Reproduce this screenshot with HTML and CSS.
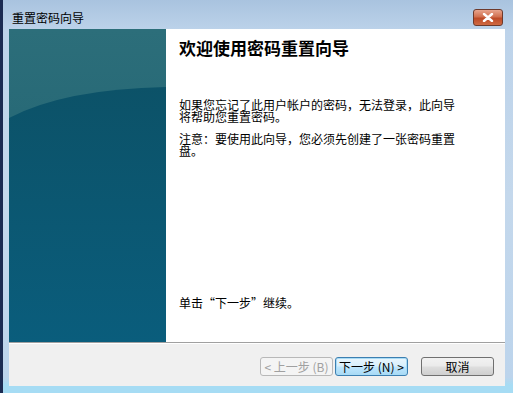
FILE: index.html
```html
<!DOCTYPE html>
<html lang="zh-CN">
<head>
    <meta charset="UTF-8">
    <title>重置密码向导</title>
    <link rel="stylesheet" href="styles.css">
</head>
<body>
    <div class="window">
        <div class="titlebar">
            <span class="title">重置密码向导</span>
            <button class="close">
                <svg width="12" height="9" viewBox="0 0 12 9">
                    <path d="M2 1 L10 8 M10 1 L2 8" stroke="#fff" stroke-width="2.4" stroke-linecap="round"/>
                </svg>
            </button>
        </div>

        <div class="client">
            <div class="content">
                <div class="side">
                    <svg width="157" height="313" viewBox="0 0 157 313" preserveAspectRatio="none">
                        <defs>
                            <linearGradient id="top" x1="0" y1="0" x2="0" y2="1">
                                <stop offset="0" stop-color="#2c6e7a"/>
                                <stop offset="1" stop-color="#1d5f6f"/>
                            </linearGradient>
                            <linearGradient id="low" x1="0" y1="0" x2="0" y2="1">
                                <stop offset="0" stop-color="#0c5268"/>
                                <stop offset="1" stop-color="#0a5d7c"/>
                            </linearGradient>
                        </defs>
                        <rect width="157" height="313" fill="url(#top)"/>
                        <path d="M0 89 Q55 60 157 58 L157 313 L0 313 Z" fill="url(#low)"/>
                    </svg>
                </div>
                <div class="main">
                    <h1>欢迎使用密码重置向导</h1>
                    <p class="intro">如果您忘记了此用户帐户的密码，无法登录，此向导将帮助您重置密码。</p>
                    <p class="note">注意：要使用此向导，您必须先创建了一张密码重置盘。</p>
                    <p class="next-hint">单击“下一步”继续。</p>
                </div>
            </div>

            <div class="footer">
                <button class="btn disabled">&lt; 上一步 (B)</button>
                <button class="btn primary">下一步 (N) &gt;</button>
                <button class="btn cancel">取消</button>
            </div>
        </div>
    </div>
</body>
</html>
```

FILE: styles.css
```css
body {
    margin: 0;
    background: #1b2b52;
    font-family: "Noto Sans CJK SC", "Noto Sans", sans-serif;
    overflow: hidden;
}

.window {
    width: 510px;
    height: 393px;
    margin-left: 3px;
    background: linear-gradient(180deg, #a9c3df 0%, #bdd3ea 8%, #c4d8ec 50%, #bcd4ec 96%, #a6dcf4 98%);
    box-sizing: border-box;
    padding: 0 8px 7px 6px;
    display: flex;
    flex-direction: column;
}

.titlebar {
    height: 29px;
    display: flex;
    align-items: flex-start;
    justify-content: space-between;
}

.title {
    font-size: 12px;
    line-height: 12px;
    margin: 12px 0 0 3px;
    color: #000;
}

.close {
    width: 30px;
    height: 17px;
    margin: 9px 2px 0 0;
    padding: 0;
    border: 1px solid #6d3a2c;
    border-radius: 3px;
    background: linear-gradient(180deg, #e8a58e 0%, #d1704f 45%, #bd4a27 55%, #cf6a43 100%);
    display: flex;
    align-items: center;
    justify-content: center;
}

.client {
    flex: 1;
    display: flex;
    flex-direction: column;
    background: #f0f0f0;
}

.content {
    height: 313px;
    display: flex;
    background: #fff;
}

.side {
    width: 157px;
    height: 313px;
}

.side svg {
    display: block;
}

.main {
    flex: 1;
    padding: 9px 13px 0;
    color: #000;
}

.main h1 {
    font-size: 17px;
    line-height: 20px;
    font-weight: bold;
    margin: 0;
}

.main p {
    font-size: 12px;
    line-height: 12px;
    margin: 0;
    width: 280px;
}

.intro {
    padding-top: 41px;
}

.note {
    padding-top: 10px;
}

.next-hint {
    padding-top: 140px;
}

.footer {
    flex: 1;
    border-top: 1px solid #a0a0a0;
    box-shadow: inset 0 1px 0 #fff;
    display: flex;
    justify-content: flex-end;
    align-items: flex-start;
    padding: 14px 11px 0 0;
}

.btn {
    width: 73px;
    height: 19px;
    padding: 0;
    font-family: "Noto Sans CJK SC", "Noto Sans", sans-serif;
    font-size: 12px;
    line-height: 15px;
    border-radius: 3px;
    color: #000;
    white-space: nowrap;
}

.disabled {
    color: #a0a0a0;
    border: 1px solid #b8b8b8;
    background: #f4f4f4;
}

.primary {
    margin-left: 2px;
    border: 1px solid #3c7fb1;
    background: linear-gradient(180deg, #eaf6fd 0%, #d9f0fc 45%, #bee6fd 55%, #a7d9f5 100%);
    box-shadow: inset 0 0 0 1px #a8dbf5;
}

.cancel {
    margin-left: 13px;
    border: 1px solid #707070;
    background: linear-gradient(180deg, #f2f2f2 0%, #ebebeb 45%, #dddddd 55%, #cfcfcf 100%);
}
```
